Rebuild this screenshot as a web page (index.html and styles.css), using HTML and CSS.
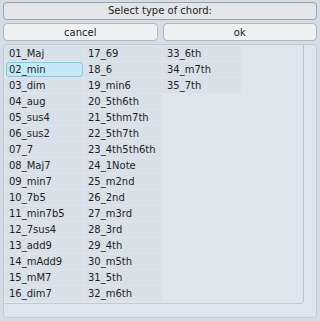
FILE: index.html
```html
<!DOCTYPE html>
<html lang="en">
<head>
    <meta charset="UTF-8">
    <title>Select type of chord</title>
    <link rel="stylesheet" href="styles.css">
</head>
<body>
    <div class="dialog">
        <div class="title">Select type of chord:</div>
        <div class="buttons">
            <button class="btn">cancel</button>
            <button class="btn">ok</button>
        </div>
        <div class="panel">
            <div class="view">
                <div class="list">
                    <div class="cell">01_Maj</div>
                    <div class="cell selected">02_min</div>
                    <div class="cell">03_dim</div>
                    <div class="cell">04_aug</div>
                    <div class="cell">05_sus4</div>
                    <div class="cell">06_sus2</div>
                    <div class="cell">07_7</div>
                    <div class="cell">08_Maj7</div>
                    <div class="cell">09_min7</div>
                    <div class="cell">10_7b5</div>
                    <div class="cell">11_min7b5</div>
                    <div class="cell">12_7sus4</div>
                    <div class="cell">13_add9</div>
                    <div class="cell">14_mAdd9</div>
                    <div class="cell">15_mM7</div>
                    <div class="cell">16_dim7</div>
                    <div class="cell">17_69</div>
                    <div class="cell">18_6</div>
                    <div class="cell">19_min6</div>
                    <div class="cell">20_5th6th</div>
                    <div class="cell">21_5thm7th</div>
                    <div class="cell">22_5th7th</div>
                    <div class="cell">23_4th5th6th</div>
                    <div class="cell">24_1Note</div>
                    <div class="cell">25_m2nd</div>
                    <div class="cell">26_2nd</div>
                    <div class="cell">27_m3rd</div>
                    <div class="cell">28_3rd</div>
                    <div class="cell">29_4th</div>
                    <div class="cell">30_m5th</div>
                    <div class="cell">31_5th</div>
                    <div class="cell">32_m6th</div>
                    <div class="cell">33_6th</div>
                    <div class="cell">34_m7th</div>
                    <div class="cell">35_7th</div>
                </div>
            </div>
        </div>
    </div>
</body>
</html>
```
FILE: styles.css
```css
body {
    margin: 0;
    width: 320px;
    height: 321px;
    overflow: hidden;
    background-color: #d3dde8;
    font-family: "DejaVu Sans", Verdana, sans-serif;
    font-size: 10px;
    color: #1e1e1e;
}
.dialog {
    padding: 2px 3px 0 3px;
}
.title {
    height: 16px;
    line-height: 16px;
    text-align: center;
    background-color: #e3e5e8;
    border: 1px solid #9ea1a6;
    border-radius: 4px;
}
.buttons {
    display: flex;
    gap: 5px;
    margin-top: 3px;
}
.btn {
    flex: 1;
    height: 18px;
    padding: 0;
    font-family: inherit;
    font-size: 10px;
    color: #1e1e1e;
    background-color: #eef0f2;
    border: 1px solid #b4b7bb;
    border-radius: 4px;
}
.panel {
    margin-top: 3px;
    height: 272px;
    border: 1px solid #c2c9d2;
    border-radius: 4px;
    background-color: #dde6ef;
}
.view {
    width: 298px;
    height: 257px;
    border-right: 1px solid #b9c3ce;
    border-bottom: 1px solid #c3ccd6;
    border-bottom-right-radius: 4px;
    padding: 1px 0 0 1px;
}
.list {
    display: grid;
    grid-template-rows: repeat(16, 16px);
    grid-auto-flow: column;
    grid-template-columns: repeat(3, 78px);
    column-gap: 1px;
}
.cell {
    line-height: 15px;
    padding-left: 4px;
    margin-bottom: 1px;
    background-color: #d8e0e9;
    white-space: nowrap;
}
.cell.selected {
    margin-left: 1px;
    padding-left: 2px;
    line-height: 13px;
    background-color: #c3e9f6;
    border: 1px solid #7fc8e0;
    border-radius: 3px;
}
```
